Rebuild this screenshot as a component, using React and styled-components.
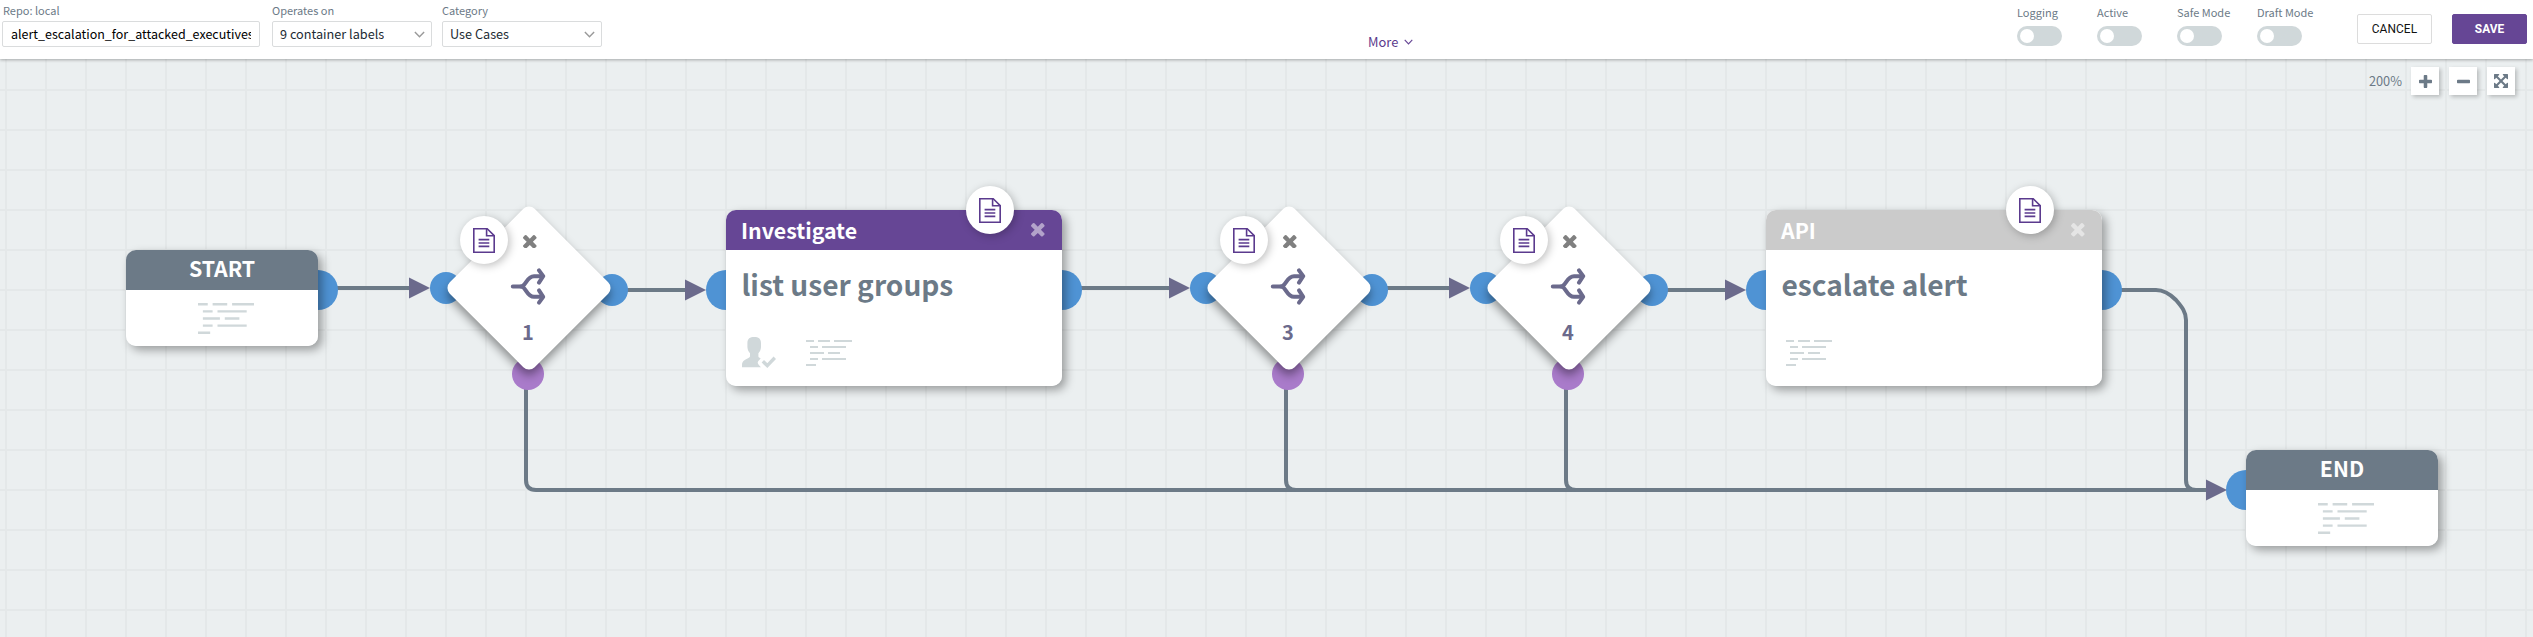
import React from "react";
import styled, { createGlobalStyle } from "styled-components";

const slate = "#6c7a87";
const purple = "#664695";
const plum = "#6b6a8c";
const blue = "#4f93d4";
const violet = "#a97bca";
const pale = "#d0d8da";

const GlobalStyle = createGlobalStyle`
  *, *::before, *::after { box-sizing: border-box; }
  body {
    margin: 0;
    font-family: "Noto Sans CJK SC", "Noto Sans", sans-serif;
    color: ${slate};
  }
`;

const Page = styled.div`
  display: flex;
  flex-direction: column;
  height: 637px;
  overflow: hidden;
`;

/* ---------- top bar ---------- */

const TopBar = styled.header`
  position: relative;
  z-index: 2;
  display: grid;
  grid-template-columns: 1366px auto 1fr;
  flex: none;
  height: 59px;
  padding: 0 6px 0 2px;
  background: #fff;
  box-shadow: 0 1px 3px rgba(0, 0, 0, 0.3);
`;

const Fields = styled.div`
  display: flex;
  gap: 10px;
  padding-top: 2px;
`;

const Field = styled.label`
  display: flex;
  flex-direction: column;
  width: ${(p) => p.$width}px;
  margin-right: ${(p) => p.$after || 0}px;
`;

const Caption = styled.span`
  height: 19px;
  padding-left: ${(p) => p.$inset || 0}px;
  font-size: 11px;
  line-height: 17px;
  white-space: nowrap;
`;

const Control = styled.div`
  display: flex;
  align-items: center;
  justify-content: space-between;
  height: 26px;
  padding: 0 ${(p) => (p.$select ? "6px 0 7px" : "8px")};
  border: 1px solid #dadcdd;
  border-radius: 2px;
  color: ${(p) => (p.$select ? "#222b33" : "#000")};
  font-size: ${(p) => (p.$select ? 12.7 : 12.5)}px;
  line-height: 24px;
`;

const Value = styled.span`
  overflow: hidden;
  white-space: nowrap;
`;

const More = styled.button`
  display: flex;
  align-items: center;
  align-self: start;
  gap: 6px;
  margin-top: 32px;
  padding: 0;
  border: 0;
  background: none;
  color: #5b3a8c;
  font: inherit;
  font-size: 12.9px;
  line-height: 20px;
`;

const Actions = styled.div`
  display: flex;
  justify-content: flex-end;
  align-items: flex-start;
`;

const Toggle = styled.div`
  display: flex;
  flex-direction: column;
  width: 80px;
`;

const ToggleLabel = styled.span`
  height: 26px;
  padding-top: 4px;
  font-size: 11px;
  line-height: 17px;
  white-space: nowrap;
`;

const Track = styled.span`
  display: flex;
  align-items: center;
  width: 45px;
  height: 20px;
  padding-left: 3px;
  border-radius: 10px;
  background: ${pale};
`;

const Knob = styled.span`
  width: 14px;
  height: 14px;
  border-radius: 50%;
  background: #fff;
`;

const Button = styled.button`
  width: 75px;
  height: 30px;
  margin: 14px 0 0 20px;
  padding: 0;
  border: 1px solid ${(p) => (p.$primary ? purple : "#dcdcdc")};
  border-radius: 2px;
  background: ${(p) => (p.$primary ? purple : "#fff")};
  color: ${(p) => (p.$primary ? "#fff" : "#111")};
  font: ${(p) => (p.$primary ? 700 : 400)} 11.9px/28px Roboto, sans-serif;
  letter-spacing: ${(p) => (p.$primary ? 0 : 0.1)}px;
`;

/* ---------- canvas ---------- */

const Canvas = styled.main`
  position: relative;
  flex: 1;
  background-color: #ebeff0;
  background-image:
    linear-gradient(#e4e8e9 2px, transparent 2px),
    linear-gradient(90deg, #e4e8e9 2px, transparent 2px);
  background-size: 40px 40px;
  background-position: 5px 30px;
`;

const ZoomBar = styled.div`
  display: flex;
  justify-content: flex-end;
  gap: 10px;
  padding: 8px 18px 0 0;
`;

const ZoomLevel = styled.span`
  margin-right: -1px;
  font-size: 12.8px;
  line-height: 27px;
`;

const ZoomButton = styled.button`
  display: flex;
  align-items: center;
  justify-content: center;
  width: 28px;
  height: 28px;
  padding: 0;
  border: 0;
  background: #fff;
  color: ${slate};
  box-shadow: 2px 2px 4px rgba(0, 0, 0, 0.22);
`;

const Wires = styled.svg`
  position: absolute;
  inset: 0;
  width: 100%;
  height: 100%;
`;

const Node = styled.section`
  position: absolute;
  left: ${(p) => p.$x}px;
  top: ${(p) => p.$y}px;
  width: ${(p) => p.$w}px;
  height: ${(p) => p.$h}px;
`;

const Port = styled.i`
  position: absolute;
  left: ${(p) => p.$cx - p.$r}px;
  top: ${(p) => p.$cy - p.$r}px;
  width: ${(p) => p.$r * 2}px;
  height: ${(p) => p.$r * 2}px;
  border-radius: 50%;
  background: ${(p) => p.$color || blue};
`;

const Card = styled.div`
  position: relative;
  display: flex;
  flex-direction: column;
  height: 100%;
  overflow: hidden;
  border-radius: 10px;
  background: #fff;
`;

const CardShadow = styled.div`
  position: relative;
  height: 100%;
  border-radius: 10px;
  box-shadow: 4px 4px 10px rgba(0, 0, 0, 0.35);
`;

const CardHeader = styled.header`
  display: flex;
  align-items: center;
  justify-content: space-between;
  flex: none;
  height: 40px;
  padding: 0 17px 0 15px;
  background: ${(p) => p.$color};
  color: #fff;
  font-weight: 700;
  font-size: 21.3px;
  line-height: 40px;
`;

const TerminalHeader = styled(CardHeader)`
  align-items: flex-start;
  justify-content: center;
  padding: 0;
  font-size: 21.3px;
  line-height: 36px;
`;

const TerminalBody = styled.div`
  display: flex;
  padding: 12.5px 0 0 72px;
`;

const CardTitle = styled.h2`
  margin: 13px 0 0;
  padding-left: 15.5px;
  font-weight: 700;
  font-size: 28.1px;
  line-height: 41px;
  white-space: nowrap;
`;

const CardFooter = styled.footer`
  display: flex;
  gap: 30px;
  padding: 33px 0 0 ${(p) => p.$inset}px;

  svg + svg { margin-top: 3px; }
  svg:only-child { margin-top: 3px; }
`;

const Badge = styled.div`
  position: absolute;
  left: ${(p) => p.$x}px;
  top: ${(p) => p.$y}px;
  display: flex;
  align-items: center;
  justify-content: center;
  width: 48px;
  height: 48px;
  border-radius: 50%;
  background: #fff;
  box-shadow: 2px 2px 8px rgba(0, 0, 0, 0.25);
`;

const Rhombus = styled.div`
  position: absolute;
  inset: 0;
  border-radius: 8px;
  background: #fff;
  box-shadow: 4px 4px 10px rgba(0, 0, 0, 0.4);
  transform: rotate(45deg);
`;

const DecisionBody = styled.div`
  position: relative;
  display: flex;
  flex-direction: column;
  align-items: center;
  height: 100%;
  padding: 6.5px 0 0 2px;
`;

const DecisionNumber = styled.strong`
  margin: 11px 4px 0 0;
  color: ${plum};
  font-size: 20px;
  line-height: 30px;
`;

const SplitSvg = styled.svg`
  margin: 19.5px 4px 0 0;
`;

/* ---------- icons ---------- */

const Chevron = ({ color, w = 11, h = 7 }) => (
  <svg width={w} height={h} viewBox="0 0 10 6" fill="none" stroke={color} strokeWidth="1.3">
    <path d="M.8.7 5 5 9.2.7" />
  </svg>
);

const CloseIcon = ({ color }) => (
  <svg width="13.6" height="13.6" viewBox="302 366 1188 1188" fill={color}>
    <path d="M1490 1322q0 40-28 68l-136 136q-28 28-68 28t-68-28l-294-294-294 294q-28 28-68 28t-68-28l-136-136q-28-28-28-68t28-68l294-294-294-294q-28-28-28-68t28-68l136-136q28-28 68-28t68 28l294 294 294-294q28-28 68-28t68 28l136 136q28 28 28 68t-28 68l-294 294 294 294q28 28 28 68z" />
  </svg>
);

const PlusIcon = () => (
  <svg width="13" height="13" viewBox="192 128 1408 1408" fill="currentColor">
    <path d="M1600 736v192q0 40-28 68t-68 28h-416v416q0 40-28 68t-68 28h-192q-40 0-68-28t-28-68v-416h-416q-40 0-68-28t-28-68v-192q0-40 28-68t68-28h416v-416q0-40 28-68t68-28h192q40 0 68 28t28 68v416h416q40 0 68 28t28 68z" />
  </svg>
);

const MinusIcon = () => (
  <svg width="13" height="13" viewBox="192 128 1408 1408" fill="currentColor">
    <path d="M1600 736v192q0 40-28 68t-68 28h-1216q-40 0-68-28t-28-68v-192q0-40 28-68t68-28h1216q40 0 68 28t28 68z" />
  </svg>
);

const ExpandIcon = () => (
  <svg width="14" height="14" viewBox="0 0 1536 1536" fill="currentColor">
    <path d="M1283 413l-355 355 355 355 144-144q29-31 70-14 39 17 39 59v448q0 26-19 45t-45 19h-448q-42 0-59-40-17-39 14-69l144-144-355-355-355 355 144 144q31 30 14 69-17 40-59 40h-448q-26 0-45-19t-19-45v-448q0-42 40-59 39-17 69 14l144 144 355-355-355-355-144 144q-19 19-45 19-12 0-24-5-40-17-40-59v-448q0-26 19-45t45-19h448q42 0 59 40 17 39-14 69l-144 144 355 355 355-355-144-144q-31-30-14-69 17-40 59-40h448q26 0 45 19t19 45v448q0 42-39 59-13 5-25 5-26 0-45-19z" />
  </svg>
);

const DocIcon = () => (
  <svg width="22" height="25" viewBox="0 0 22 25" fill="none" stroke="#5b3a8e" strokeWidth="1.6">
    <path d="M.8.8H14.2L21.2 7.6V24.2H.8Z" />
    <path d="M13.6.8V7.8H21.2" />
    <path d="M5.6 11.6H16.3M5.6 15H16.3M5.6 18.4H16.3" />
  </svg>
);

const ScriptIcon = ({ w = 46, h = 26 }) => (
  <svg width={w} height={h} viewBox="0 0 46 26" preserveAspectRatio="none" stroke={pale} strokeWidth="2">
    <path d="M0 1H8M12 1H24M28 1H46M4 7H12M16 7H40M4 13H18M22 13H34M4 19H12M16 19H40M0 25H10" />
  </svg>
);

const UserCheckIcon = () => (
  <svg width="34" height="31" viewBox="0 0 34 31" fill={pale}>
    <path d="M12.2 0C8 0 5.4 1.6 5.4 6V10C5.6 13 6.6 14.6 8 16.3V19.6C7.4 21 5 21.6 2.8 23C.6 24.4 0 26 0 28V30.2H19C17.4 28.4 15.6 26.6 15.7 25.4C15.8 24 17.6 22.8 18.7 21.2C17.6 20.8 16.6 20.4 16.4 19.4V16.3C17.8 14.6 18.8 13 19 10V6C19 1.6 16.4 0 12.2 0Z" />
    <path d="M20.8 24.3 25.3 28.6 32.8 20.8" fill="none" stroke={pale} strokeWidth="3.4" />
  </svg>
);

const SplitIcon = () => (
  <SplitSvg width="36" height="38" viewBox="0 0 36 38" fill="none" stroke={plum} strokeWidth="4" strokeLinecap="round" strokeLinejoin="round">
    <path d="M2.8 18.4H11C16 18.4 16.5 8.2 24 8.2H32" />
    <path d="M11 18.4C16 18.4 16.5 28.8 24 28.8H32" />
    <path d="M29 2.4 33.2 8.2 29 14.6" />
    <path d="M29 22.4 33.2 28.8 29 34.6" />
  </SplitSvg>
);

/* ---------- nodes ---------- */

const Terminal = ({ x, y, name, portX, portY }) => (
  <Node $x={x} $y={y} $w={192} $h={96}>
    <Port $cx={portX} $cy={portY} $r={20} />
    <CardShadow>
      <Card>
        <TerminalHeader $color={slate}>{name}</TerminalHeader>
        <TerminalBody>
          <ScriptIcon w={56} h={31} />
        </TerminalBody>
      </Card>
    </CardShadow>
  </Node>
);

const Decision = ({ x, number }) => (
  <Node $x={x} $y={169} $w={120} $h={120}>
    <Port $cx={-23} $cy={60} $r={16} />
    <Port $cx={143} $cy={62} $r={16} />
    <Port $cx={59} $cy={146} $r={16} $color={violet} />
    <Rhombus />
    <DecisionBody>
      <CloseIcon color="#808080" />
      <SplitIcon />
      <DecisionNumber>{number}</DecisionNumber>
    </DecisionBody>
    <Badge $x={-9} $y={-12}>
      <DocIcon />
    </Badge>
  </Node>
);

const ActionCard = ({ x, kind, color, title, user }) => (
  <Node $x={x} $y={151} $w={336} $h={176}>
    <Port $cx={0} $cy={80} $r={20} />
    <Port $cx={336} $cy={80} $r={20} />
    <CardShadow>
      <Card>
        <CardHeader $color={color}>
          {kind}
          <CloseIcon color="rgba(255,255,255,.5)" />
        </CardHeader>
        <CardTitle>{title}</CardTitle>
        <CardFooter $inset={user ? 16 : 20}>
          {user && <UserCheckIcon />}
          <ScriptIcon />
        </CardFooter>
      </Card>
    </CardShadow>
    <Badge $x={240} $y={-24}>
      <DocIcon />
    </Badge>
  </Node>
);

const wirePaths = [
  "M336 229H412",
  "M626 231H688",
  "M1080 229H1172",
  "M1386 229H1452",
  "M1666 231H1728",
  "M2120 231H2156C2165 231 2171 236 2176 241C2182 248 2186 253 2186 261V421Q2186 431 2196 431",
  "M526 330V421Q526 431 536 431H2208",
  "M1286 330V421Q1286 431 1296 431",
  "M1566 330V421Q1566 431 1576 431",
];

const arrows = [
  [430, 229],
  [706, 231],
  [1190, 229],
  [1470, 229],
  [1746, 231],
  [2227, 431],
];

const toggles = ["Logging", "Active", "Safe Mode", "Draft Mode"];

export default function App() {
  return (
    <Page>
      <GlobalStyle />
      <TopBar>
        <Fields>
          <Field $width={258} $after={2}>
            <Caption $inset={1}>Repo: local</Caption>
            <Control>
              <Value>alert_escalation_for_attacked_executives</Value>
            </Control>
          </Field>
          <Field $width={160}>
            <Caption>Operates on</Caption>
            <Control $select>
              <Value>9 container labels</Value>
              <Chevron color="#9a9a9a" />
            </Control>
          </Field>
          <Field $width={160}>
            <Caption>Category</Caption>
            <Control $select>
              <Value>Use Cases</Value>
              <Chevron color="#9a9a9a" />
            </Control>
          </Field>
        </Fields>
        <More>
          More
          <Chevron color={purple} w={9} h={6} />
        </More>
        <Actions>
          {toggles.map((name) => (
            <Toggle key={name}>
              <ToggleLabel>{name}</ToggleLabel>
              <Track>
                <Knob />
              </Track>
            </Toggle>
          ))}
          <Button>CANCEL</Button>
          <Button $primary>SAVE</Button>
        </Actions>
      </TopBar>
      <Canvas>
        <Wires>
          <g fill="none" stroke={slate} strokeWidth="4">
            {wirePaths.map((d) => (
              <path key={d} d={d} />
            ))}
          </g>
          <g fill={plum}>
            {arrows.map(([x, y]) => (
              <path key={x} d={`M${x} ${y}l-21 -10.5v21z`} />
            ))}
          </g>
        </Wires>
        <Terminal x={126} y={191} name="START" portX={192} portY={40} />
        <Decision x={469} number="1" />
        <ActionCard x={726} kind="Investigate" color={purple} title="list user groups" user />
        <Decision x={1229} number="3" />
        <Decision x={1509} number="4" />
        <ActionCard x={1766} kind="API" color="#cbcbcb" title="escalate alert" />
        <Terminal x={2246} y={391} name="END" portX={0} portY={40} />
        <ZoomBar>
          <ZoomLevel>200%</ZoomLevel>
          <ZoomButton aria-label="Zoom in"><PlusIcon /></ZoomButton>
          <ZoomButton aria-label="Zoom out"><MinusIcon /></ZoomButton>
          <ZoomButton aria-label="Fit to screen"><ExpandIcon /></ZoomButton>
        </ZoomBar>
      </Canvas>
    </Page>
  );
}
